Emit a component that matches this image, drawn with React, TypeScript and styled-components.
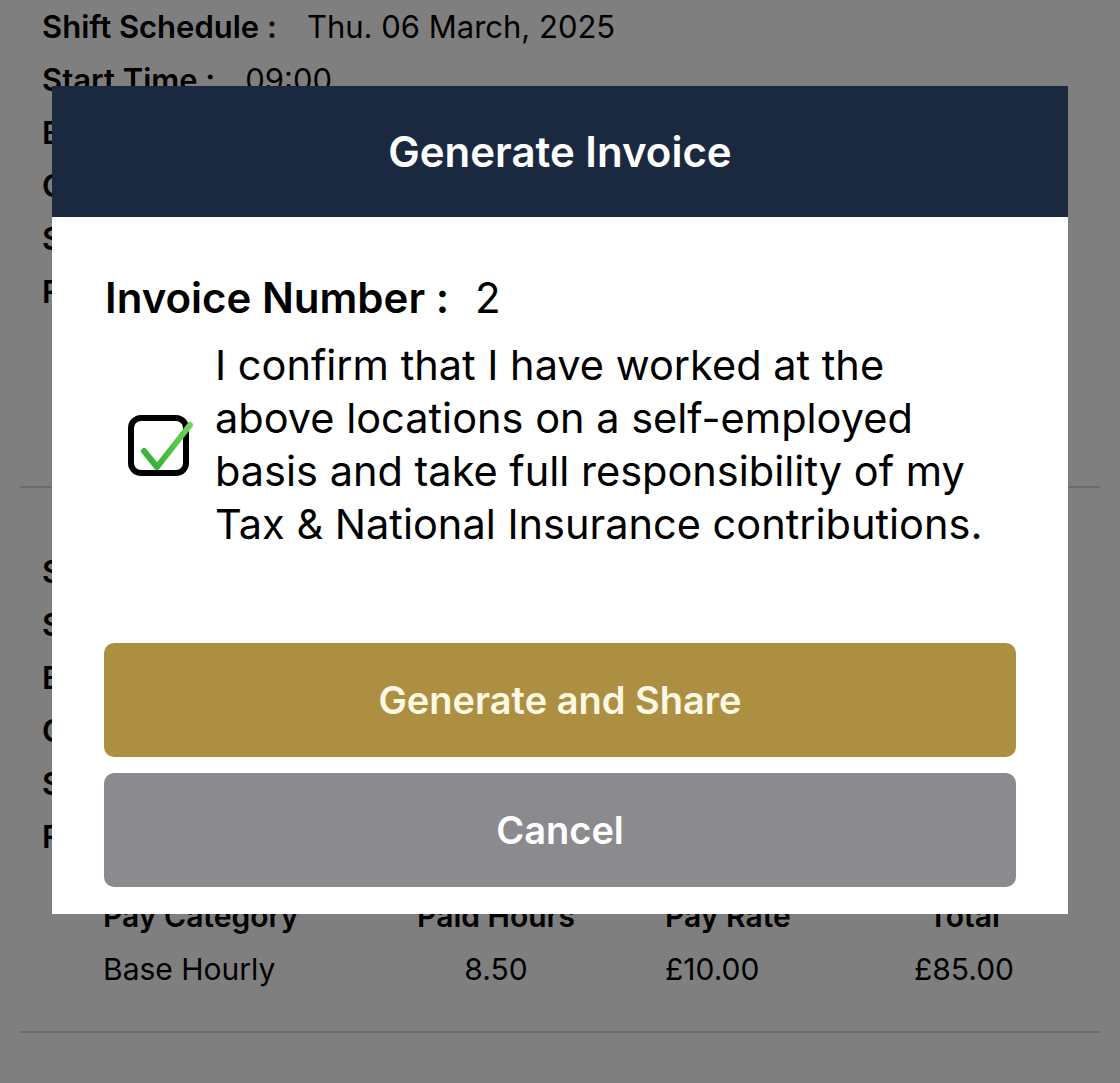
import styled, { createGlobalStyle } from 'styled-components';

const GlobalStyle = createGlobalStyle`
  html, body {
    margin: 0;
    padding: 0;
    background: #ffffff;
    overflow: hidden;
  }
  body {
    font-family: Inter, "Noto Sans", "Liberation Sans", sans-serif;
    color: #000;
  }
`;

const Page = styled.div`
  height: 100vh;
  overflow: hidden;
  background: #ffffff;
`;

const Section = styled.section<{ $top?: number }>`
  padding-top: ${(p) => p.$top ?? 0}px;
`;

const InfoRow = styled.div`
  display: flex;
  align-items: center;
  height: 53px;
  padding-left: 42px;
  font-size: 31px;
  white-space: nowrap;
`;

const InfoLabel = styled.span`
  font-weight: 600;
`;

const InfoValue = styled.span`
  margin-left: 30px;
`;

const PayTable = styled.div`
  display: grid;
  grid-template-columns: 290px 206px 295px 140px;
  grid-auto-rows: 53px;
  align-items: center;
  margin-top: 26px;
  padding-left: 103px;
  font-size: 30px;
  white-space: nowrap;
`;

const Cell = styled.span<{ $align?: 'left' | 'center'; $head?: boolean; $pad?: number }>`
  text-align: ${(p) => p.$align ?? 'left'};
  font-weight: ${(p) => (p.$head ? 600 : 400)};
  padding-left: ${(p) => p.$pad ?? 0}px;
`;

const Divider = styled.hr`
  margin: 36px 20px 0;
  border: 0;
  height: 2px;
  background: #d4d4d4;
`;

const Overlay = styled.div`
  position: fixed;
  inset: 0;
  background: rgba(0, 0, 0, 0.5);
  padding: 86px 52px 0;
`;

const Modal = styled.div`
  background: #ffffff;
  display: flex;
  flex-direction: column;
`;

const ModalHeader = styled.header`
  height: 131px;
  background: #1a2940;
  color: #ffffff;
  display: flex;
  align-items: center;
  justify-content: center;
  font-size: 42px;
  font-weight: 600;
`;

const ModalBody = styled.div`
  padding: 54px 52px 27px;
`;

const InvoiceLine = styled.div`
  font-size: 42px;
  line-height: 53px;
  color: #000;
  padding-left: 1px;
`;

const InvoiceLabel = styled.span`
  font-weight: 600;
`;

const InvoiceValue = styled.span`
  margin-left: 26px;
`;

const ConfirmRow = styled.label`
  display: flex;
  align-items: center;
  gap: 26px;
  margin-top: 15px;
  padding-left: 24px;
`;

const CheckBox = styled.span`
  position: relative;
  flex: none;
  width: 61px;
  height: 61px;
  box-sizing: border-box;
  border: 6px solid #000;
  border-radius: 13px;
  svg {
    position: absolute;
    left: 4px;
    top: -6px;
  }
`;

const ConfirmText = styled.p`
  margin: 0;
  font-size: 41.5px;
  line-height: 53px;
  color: #000;
  white-space: nowrap;
`;

const Actions = styled.div`
  display: flex;
  flex-direction: column;
  gap: 16px;
  margin-top: 92px;
`;

const ActionButton = styled.button<{ $tone: 'gold' | 'gray' }>`
  height: 114px;
  border: 0;
  border-radius: 10px;
  background: ${(p) => (p.$tone === 'gold' ? '#ad8f41' : '#8a8a8f')};
  color: ${(p) => (p.$tone === 'gold' ? '#fdf8e4' : '#ffffff')};
  font-family: inherit;
  font-size: 38px;
  font-weight: 600;
  cursor: pointer;
`;

const rows = [
  ['Shift Schedule :', 'Thu. 06 March, 2025'],
  ['Start Time :', '09:00'],
  ['Break Time :', '00:30'],
  ['Client :', 'Harbour Security Ltd'],
  ['Site :', 'Riverside Centre'],
  ['Finish Time :', '18:00'],
];

function ShiftSection({ top }: { top?: number }) {
  return (
    <Section $top={top}>
      {rows.map(([label, value]) => (
        <InfoRow key={label}>
          <InfoLabel>{label}</InfoLabel>
          <InfoValue>{value}</InfoValue>
        </InfoRow>
      ))}
      <PayTable>
        <Cell $head>Pay Category</Cell>
        <Cell $head $align="center">Paid Hours</Cell>
        <Cell $head $pad={66}>Pay Rate</Cell>
        <Cell $head $align="center">Total</Cell>
        <Cell>Base Hourly</Cell>
        <Cell $align="center">8.50</Cell>
        <Cell $pad={66}>£10.00</Cell>
        <Cell $align="center">£85.00</Cell>
      </PayTable>
    </Section>
  );
}

function GreenTick() {
  return (
    <svg width="56" height="58" viewBox="0 0 56 58">
      <defs>
        <linearGradient id="tick" x1="0" y1="1" x2="1" y2="0">
          <stop offset="0" stopColor="#2fae35" />
          <stop offset="1" stopColor="#6fd45a" />
        </linearGradient>
      </defs>
      <path
        d="M6 36 L19 52 L52 10"
        fill="none"
        stroke="url(#tick)"
        strokeWidth="6"
        strokeLinecap="round"
        strokeLinejoin="round"
      />
    </svg>
  );
}

export default function App() {
  return (
    <>
      <GlobalStyle />
      <Page>
        <ShiftSection />
        <Divider />
        <ShiftSection top={57} />
        <Divider />
      </Page>
      <Overlay>
        <Modal>
          <ModalHeader>Generate Invoice</ModalHeader>
          <ModalBody>
            <InvoiceLine>
              <InvoiceLabel>Invoice Number :</InvoiceLabel>
              <InvoiceValue>2</InvoiceValue>
            </InvoiceLine>
            <ConfirmRow>
              <CheckBox>
                <GreenTick />
              </CheckBox>
              <ConfirmText>
                I confirm that I have worked at the
                <br />
                above locations on a self-employed
                <br />
                basis and take full responsibility of my
                <br />
                Tax &amp; National Insurance contributions.
              </ConfirmText>
            </ConfirmRow>
            <Actions>
              <ActionButton $tone="gold">Generate and Share</ActionButton>
              <ActionButton $tone="gray">Cancel</ActionButton>
            </Actions>
          </ModalBody>
        </Modal>
      </Overlay>
    </>
  );
}
